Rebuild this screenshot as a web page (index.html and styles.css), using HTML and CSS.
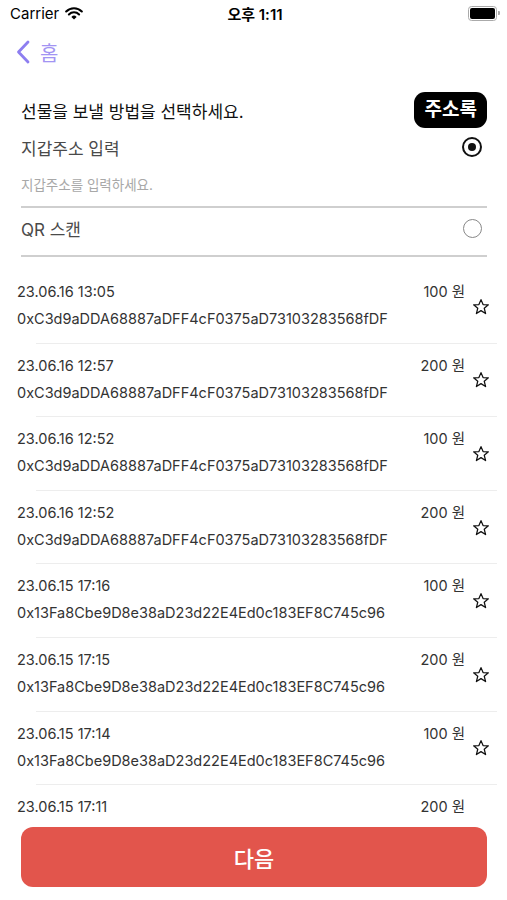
FILE: index.html
```html
<!DOCTYPE html>
<html>

<head>
    <link rel="stylesheet" href="styles.css">
</head>

<body>
    <div class="screen">
        <div class="statusbar">
            <div class="carrier">
                Carrier
                <svg class="wifi" width="18" height="13" viewBox="0 0 18 13">
                    <path d="M9 12.6 L6.4 9.9 A3.7 3.7 0 0 1 11.6 9.9 Z" fill="#000"/>
                    <path d="M3.9 7.4 A7.2 7.2 0 0 1 14.1 7.4" fill="none" stroke="#000" stroke-width="2.1" stroke-linecap="round"/>
                    <path d="M1.2 4.5 A11 11 0 0 1 16.8 4.5" fill="none" stroke="#000" stroke-width="2.1" stroke-linecap="round"/>
                </svg>
            </div>
            <div class="clock">오후 1:11</div>
            <div class="battery">
                <span class="battery-body"><span class="battery-fill"></span></span>
                <span class="battery-cap"></span>
            </div>
        </div>

        <div class="nav">
            <svg class="back-icon" width="14" height="24" viewBox="0 0 14 24">
                <path d="M12 2 L2.5 12 L12 22" fill="none" stroke="#8d7ef0" stroke-width="2.8" stroke-linecap="round" stroke-linejoin="round"/>
            </svg>
            <span class="back-label">홈</span>
        </div>

        <div class="section">
            <div class="title-row">
                <span class="title">선물을 보낼 방법을 선택하세요.</span>
                <span class="badge">주소록</span>
            </div>

            <div class="option">
                <span class="option-label">지갑주소 입력</span>
                <span class="radio checked"></span>
            </div>
            <div class="input-line">지갑주소를 입력하세요.</div>

            <div class="option qr">
                <span class="option-label">QR 스캔</span>
                <span class="radio"></span>
            </div>
        </div>

        <div class="history">
            <div class="row">
                <div class="row-main">
                    <div class="row-top"><span>23.06.16 13:05</span><span>100 원</span></div>
                    <div class="addr">0xC3d9aDDA68887aDFF4cF0375aD73103283568fDF</div>
                </div>
                <svg class="star" viewBox="0 0 20 20"><path d="M10 1.8 L12.3 7.3 L18.2 7.6 L13.6 11.4 L15.1 17.3 L10 14 L4.9 17.3 L6.4 11.4 L1.8 7.6 L7.7 7.3 Z"/></svg>
            </div>
            <div class="row">
                <div class="row-main">
                    <div class="row-top"><span>23.06.16 12:57</span><span>200 원</span></div>
                    <div class="addr">0xC3d9aDDA68887aDFF4cF0375aD73103283568fDF</div>
                </div>
                <svg class="star" viewBox="0 0 20 20"><path d="M10 1.8 L12.3 7.3 L18.2 7.6 L13.6 11.4 L15.1 17.3 L10 14 L4.9 17.3 L6.4 11.4 L1.8 7.6 L7.7 7.3 Z"/></svg>
            </div>
            <div class="row">
                <div class="row-main">
                    <div class="row-top"><span>23.06.16 12:52</span><span>100 원</span></div>
                    <div class="addr">0xC3d9aDDA68887aDFF4cF0375aD73103283568fDF</div>
                </div>
                <svg class="star" viewBox="0 0 20 20"><path d="M10 1.8 L12.3 7.3 L18.2 7.6 L13.6 11.4 L15.1 17.3 L10 14 L4.9 17.3 L6.4 11.4 L1.8 7.6 L7.7 7.3 Z"/></svg>
            </div>
            <div class="row">
                <div class="row-main">
                    <div class="row-top"><span>23.06.16 12:52</span><span>200 원</span></div>
                    <div class="addr">0xC3d9aDDA68887aDFF4cF0375aD73103283568fDF</div>
                </div>
                <svg class="star" viewBox="0 0 20 20"><path d="M10 1.8 L12.3 7.3 L18.2 7.6 L13.6 11.4 L15.1 17.3 L10 14 L4.9 17.3 L6.4 11.4 L1.8 7.6 L7.7 7.3 Z"/></svg>
            </div>
            <div class="row">
                <div class="row-main">
                    <div class="row-top"><span>23.06.15 17:16</span><span>100 원</span></div>
                    <div class="addr">0x13Fa8Cbe9D8e38aD23d22E4Ed0c183EF8C745c96</div>
                </div>
                <svg class="star" viewBox="0 0 20 20"><path d="M10 1.8 L12.3 7.3 L18.2 7.6 L13.6 11.4 L15.1 17.3 L10 14 L4.9 17.3 L6.4 11.4 L1.8 7.6 L7.7 7.3 Z"/></svg>
            </div>
            <div class="row">
                <div class="row-main">
                    <div class="row-top"><span>23.06.15 17:15</span><span>200 원</span></div>
                    <div class="addr">0x13Fa8Cbe9D8e38aD23d22E4Ed0c183EF8C745c96</div>
                </div>
                <svg class="star" viewBox="0 0 20 20"><path d="M10 1.8 L12.3 7.3 L18.2 7.6 L13.6 11.4 L15.1 17.3 L10 14 L4.9 17.3 L6.4 11.4 L1.8 7.6 L7.7 7.3 Z"/></svg>
            </div>
            <div class="row">
                <div class="row-main">
                    <div class="row-top"><span>23.06.15 17:14</span><span>100 원</span></div>
                    <div class="addr">0x13Fa8Cbe9D8e38aD23d22E4Ed0c183EF8C745c96</div>
                </div>
                <svg class="star" viewBox="0 0 20 20"><path d="M10 1.8 L12.3 7.3 L18.2 7.6 L13.6 11.4 L15.1 17.3 L10 14 L4.9 17.3 L6.4 11.4 L1.8 7.6 L7.7 7.3 Z"/></svg>
            </div>
            <div class="row last">
                <div class="row-main">
                    <div class="row-top"><span>23.06.15 17:11</span><span>200 원</span></div>
                </div>
            </div>
        </div>

        <div class="footer">
            <button class="next-btn">다음</button>
        </div>
    </div>
</body>

</html>
```

FILE: styles.css
```css
body {
    margin: 0;
    padding: 0;
    background-color: #fff;
    font-family: Inter, "Noto Sans CJK KR", sans-serif;
    color: #000;
}

.screen {
    width: 507px;
    height: 900px;
    display: flex;
    flex-direction: column;
    overflow: hidden;
}

/* status bar */
.statusbar {
    height: 26px;
    display: flex;
    align-items: center;
    justify-content: space-between;
    padding: 0 7px 0 10px;
    font-size: 15px;
}

.carrier {
    display: flex;
    align-items: center;
    gap: 6px;
    width: 120px;
}

.clock {
    font-weight: 600;
}

.battery {
    width: 120px;
    display: flex;
    justify-content: flex-end;
    align-items: center;
}

.battery-body {
    width: 25px;
    height: 11px;
    border: 1px solid #aaa;
    border-radius: 3.5px;
    padding: 1px;
    box-sizing: content-box;
    display: flex;
}

.battery-fill {
    flex: 1;
    background-color: #000;
    border-radius: 2px;
}

.battery-cap {
    width: 2px;
    height: 4px;
    background-color: #aaa;
    border-radius: 0 1px 1px 0;
    margin-left: 1px;
}

/* nav */
.nav {
    height: 52px;
    display: flex;
    align-items: center;
    gap: 10px;
    padding-left: 16px;
}

.back-label {
    font-size: 20px;
    color: #a294f3;
}

/* method section */
.section {
    padding: 14px 20px 0 21px;
}

.title-row {
    display: flex;
    justify-content: space-between;
    align-items: center;
    height: 36px;
}

.title {
    font-size: 17px;
    color: #111;
}

.badge {
    background-color: #000;
    color: #fff;
    font-size: 19px;
    font-weight: 700;
    border-radius: 11px;
    padding: 0 10px 0 11px;
    height: 36px;
    line-height: 36px;
}

.option {
    display: flex;
    justify-content: space-between;
    align-items: center;
    height: 36px;
    margin-top: 1px;
    padding-right: 5px;
}

.option-label {
    font-size: 17px;
    color: #4a4a4a;
}

.radio {
    width: 17px;
    height: 17px;
    border: 1.5px solid #888;
    border-radius: 50%;
    display: flex;
    align-items: center;
    justify-content: center;
}

.radio.checked {
    border: 2px solid #111;
    width: 16px;
    height: 16px;
}

.radio.checked::after {
    content: "";
    width: 8px;
    height: 8px;
    border-radius: 50%;
    background-color: #111;
}

.input-line {
    font-size: 13.5px;
    color: #a8a8a8;
    padding-top: 10px;
    height: 31px;
    line-height: 20px;
    border-bottom: 2px solid #cfcfcf;
}

.option.qr {
    margin-top: 0;
    padding-bottom: 6px;
    box-sizing: border-box;
    height: 49px;
    border-bottom: 2px solid #cfcfcf;
}

/* history list */
.history {
    flex: 1;
    overflow: hidden;
    padding-top: 13px;
    min-height: 0;
}

.row {
    display: flex;
    align-items: center;
    height: 73.6px;
    box-sizing: border-box;
    padding: 0 17px 0 17px;
    position: relative;
}

.row::after {
    content: "";
    position: absolute;
    left: 36px;
    right: 10px;
    bottom: 0;
    height: 1px;
    background-color: #ededed;
}

.row-main {
    flex: 1;
    display: flex;
    flex-direction: column;
    gap: 7px;
    align-self: flex-start;
    padding-top: 12px;
}

.row-top {
    display: flex;
    justify-content: space-between;
    font-size: 14.5px;
    line-height: 20px;
    color: #333;
    padding-right: 7px;
}

.row.last .row-top {
    padding-right: 25px;
}

.addr {
    font-size: 14.5px;
    line-height: 20px;
    color: #333;
}

.star {
    width: 18px;
    height: 18px;
    fill: none;
    stroke: #111;
    stroke-width: 1.4;
    stroke-linejoin: round;
}

/* bottom button */
.footer {
    padding: 5px 20px 13px 21px;
}

.next-btn {
    width: 100%;
    height: 60px;
    border: none;
    border-radius: 12px;
    background-color: #e2554c;
    color: #fff;
    font-family: Inter, "Noto Sans CJK KR", sans-serif;
    font-size: 22px;
    font-weight: 500;
}
```
